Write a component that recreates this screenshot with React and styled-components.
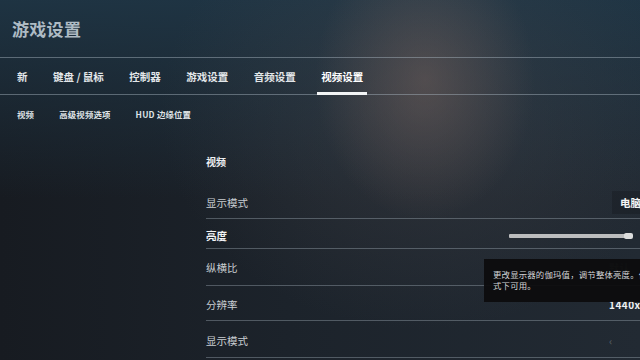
import React from 'react'
import styled, { createGlobalStyle } from 'styled-components'

const GlobalStyle = createGlobalStyle`
  html, body {
    margin: 0;
    padding: 0;
    background: #1b222a;
  }
  body {
    font-family: "Noto Sans CJK SC", "Noto Sans", sans-serif;
  }
`

const Page = styled.div`
  position: relative;
  width: 640px;
  height: 360px;
  overflow: hidden;
  display: flex;
  flex-direction: column;
  background:
    radial-gradient(ellipse 110px 140px at 425px 80px, rgba(125, 102, 95, 0.45), rgba(125, 102, 95, 0) 100%),
    radial-gradient(ellipse 260px 220px at 420px 110px, rgba(80, 78, 82, 0.35), rgba(80, 78, 82, 0) 100%),
    linear-gradient(180deg, rgba(31, 54, 70, 0.9) 0%, rgba(31, 54, 70, 0) 55%),
    linear-gradient(90deg, #171b21 0%, #1c232b 45%, #222a33 100%);
`

const Header = styled.div`
  height: 57px;
  display: flex;
  align-items: center;
  padding-left: 12px;
`

const Title = styled.h1`
  margin: 0;
  font-size: 17px;
  font-weight: 700;
  color: #aebbc4;
  letter-spacing: 0.3px;
`

const TabBar = styled.div`
  height: 36px;
  display: flex;
  align-items: stretch;
  gap: 17.5px;
  padding-left: 13px;
  border-top: 1px solid rgba(170, 185, 195, 0.45);
  border-bottom: 1px solid rgba(170, 185, 195, 0.45);
`

const Tab = styled.div`
  position: relative;
  display: flex;
  align-items: center;
  padding: 0 4px;
  font-size: 10.5px;
  font-weight: 700;
  color: ${p => (p.active ? '#ffffff' : '#e2e6e9')};

  &::after {
    content: '';
    display: ${p => (p.active ? 'block' : 'none')};
    position: absolute;
    left: 0;
    right: 0;
    bottom: -1px;
    height: 3px;
    background: #f2f4f5;
  }
`

const SubBar = styled.div`
  height: 37px;
  display: flex;
  align-items: center;
  gap: 25px;
  padding-left: 17px;
`

const SubTab = styled.div`
  font-size: 8.4px;
  font-weight: 700;
  letter-spacing: 0.2px;
  color: #dfe3e6;
`

const Body = styled.div`
  flex: 1;
  display: flex;
  padding-left: 206px;
`

const Content = styled.div`
  flex: 1;
  display: flex;
  flex-direction: column;
`

const SectionTitle = styled.div`
  height: 53px;
  padding-top: 22px;
  box-sizing: border-box;
  font-size: 10px;
  font-weight: 700;
  color: #eef0f2;
`

const Row = styled.div`
  height: ${p => p.h}px;
  box-sizing: border-box;
  display: flex;
  align-items: center;
  justify-content: space-between;
  padding-top: ${p => p.pt || 0}px;
  border-bottom: 1px solid rgba(160, 172, 182, 0.4);
`

const Label = styled.div`
  font-size: 10.5px;
  font-weight: ${p => (p.strong ? 700 : 400)};
  color: ${p => (p.strong ? '#f2f4f5' : '#c9ced2')};
`

const ValueBox = styled.div`
  align-self: stretch;
  margin: 5px 0 4px;
  width: 20px;
  display: flex;
  align-items: center;
  padding-left: 8px;
  background: rgba(20, 24, 30, 0.35);
  font-size: 10.5px;
  font-weight: 700;
  color: #f4f5f6;
  white-space: nowrap;
  overflow: hidden;
`

const Value = styled.div`
  width: 31px;
  font-size: 10px;
  font-weight: 700;
  letter-spacing: 0.5px;
  color: ${p => (p.dim ? 'rgba(230,230,230,0.25)' : '#f0f2f3')};
  white-space: nowrap;
  overflow: hidden;
`

const Slider = styled.div`
  position: relative;
  width: 122px;
  height: 4px;
  margin-right: 9px;
  background: #bcbdbe;
  border-radius: 1px;
`

const Thumb = styled.div`
  position: absolute;
  right: -2px;
  top: -1px;
  width: 9px;
  height: 6px;
  border-radius: 2px;
  background: #dcdddd;
`

const Tooltip = styled.div`
  position: absolute;
  left: 484px;
  top: 259px;
  width: 215px;
  height: 43px;
  box-sizing: border-box;
  padding: 10px 0 0 9px;
  background: rgba(12, 12, 13, 0.94);
  font-size: 8.4px;
  line-height: 11px;
  letter-spacing: 0.2px;
  color: #d4d6d8;
  white-space: nowrap;
`

export default function App() {
  return (
    <>
      <GlobalStyle />
      <Page>
        <Header>
          <Title>游戏设置</Title>
        </Header>
        <TabBar>
          <Tab>新</Tab>
          <Tab>键盘 / 鼠标</Tab>
          <Tab>控制器</Tab>
          <Tab>游戏设置</Tab>
          <Tab>音频设置</Tab>
          <Tab active>视频设置</Tab>
        </TabBar>
        <SubBar>
          <SubTab>视频</SubTab>
          <SubTab>高级视频选项</SubTab>
          <SubTab>HUD 边缘位置</SubTab>
        </SubBar>
        <Body>
          <Content>
            <SectionTitle>视频</SectionTitle>
            <Row h={34} pt={1}>
              <Label>显示模式</Label>
              <ValueBox>电脑</ValueBox>
            </Row>
            <Row h={30} pt={4}>
              <Label strong>亮度</Label>
              <Slider>
                <Thumb />
              </Slider>
            </Row>
            <Row h={37}>
              <Label>纵横比</Label>
              <Value dim>默认</Value>
            </Row>
            <Row h={35} pt={3}>
              <Label>分辨率</Label>
              <Value>1440x1080</Value>
            </Row>
            <Row h={37} pt={3}>
              <Label>显示模式</Label>
              <Value dim>‹</Value>
            </Row>
          </Content>
        </Body>
        <Tooltip>
          更改显示器的伽玛值，调节整体亮度。仅在全屏模
          <br />
          式下可用。
        </Tooltip>
      </Page>
    </>
  )
}
